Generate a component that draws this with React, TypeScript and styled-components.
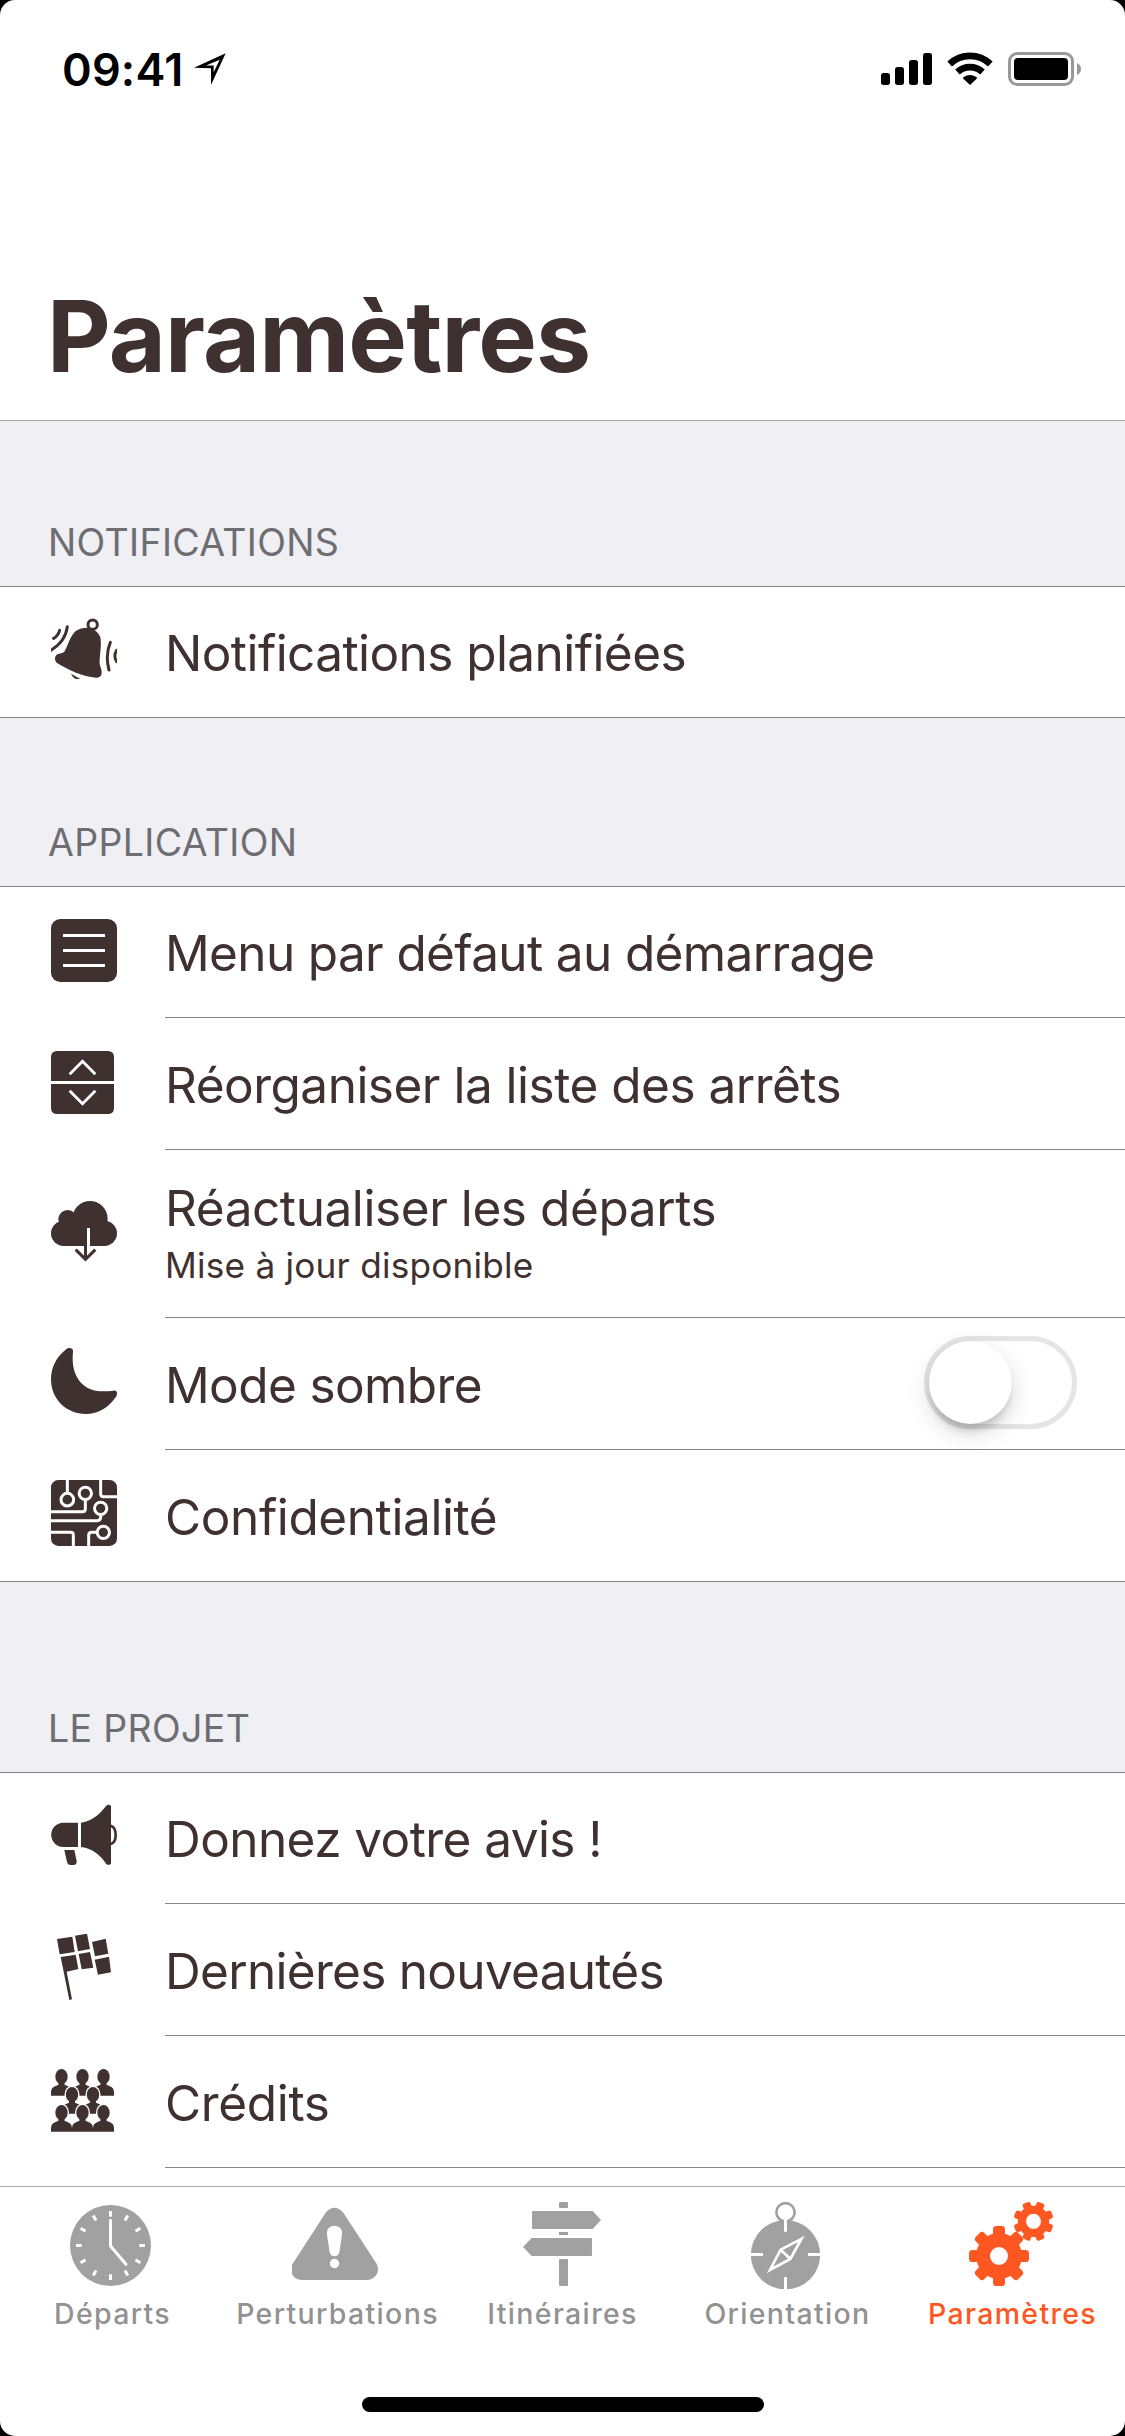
import React from 'react';
import styled, { createGlobalStyle } from 'styled-components';

const INK = '#3e3130';
const LINE = '#848484';
const GREY = '#a1a1a1';
const ORANGE = '#ff5722';

const GlobalStyle = createGlobalStyle`
  * { box-sizing: border-box; }
  body { margin: 0; background: #000; font-family: Inter, 'Liberation Sans', sans-serif; }
`;

const Screen = styled.div`
  width: 1125px;
  height: 2436px;
  display: flex;
  flex-direction: column;
  overflow: hidden;
  background: #fff;
  border-radius: 15px;
  color: ${INK};
`;

const StatusBar = styled.div`
  display: flex;
  align-items: flex-start;
  height: 132px;
  padding: 52px 44px 0 62px;
`;

const Clock = styled.span`
  color: #000;
  font-size: 45px;
  font-weight: 600;
  line-height: 35px;
  letter-spacing: 0.2px;
  width: 132px;
  white-space: nowrap;
`;

const StatusIcons = styled.div`
  display: flex;
  gap: 15px;
  margin-left: auto;
`;

const Header = styled.header`
  flex: none;
  height: 421px;
  border-bottom: 1px solid #a7a7aa;
`;

const Title = styled.h1`
  margin: 144px 0 0 47px;
  font-size: 98.5px;
  font-weight: 700;
  line-height: 121px;
  letter-spacing: -0.85px;
`;

const Content = styled.main`
  flex: none;
  height: 1765px;
  overflow: hidden;
  background: #efeff4;
`;

const SectionHeader = styled.h2<{ $height: number }>`
  display: flex;
  align-items: flex-end;
  height: ${(p) => p.$height}px;
  margin: 0;
  padding: 0 0 20px 48px;
  color: #6d6d72;
  font-size: 37.5px;
  font-weight: 400;
  line-height: 47px;
  letter-spacing: 0.33px;
`;

const Group = styled.div`
  background: #fff;
  border-top: 1px solid ${LINE};
`;

const Row = styled.div<{ $height: number; $last?: boolean }>`
  display: flex;
  height: ${(p) => p.$height}px;
  padding-left: 51px;
  border-bottom: ${(p) => (p.$last ? `1px solid ${LINE}` : 'none')};
`;

const RowIcon = styled.svg<{ $top: number }>`
  flex: none;
  width: 66px;
  height: 66px;
  margin: ${(p) => p.$top}px 48px 0 0;
  fill: ${INK};
`;

const RowBody = styled.div<{ $last?: boolean }>`
  flex: 1;
  display: flex;
  justify-content: space-between;
  align-items: center;
  padding-top: 2px;
  border-bottom: ${(p) => (p.$last ? 'none' : `1px solid ${LINE}`)};
`;

const Labels = styled.div`
  display: flex;
  flex-direction: column;
`;

const Label = styled.span<{ $spacing: number }>`
  font-size: 49.5px;
  line-height: 60px;
  letter-spacing: ${(p) => p.$spacing}px;
  white-space: nowrap;
`;

const SubLabel = styled.span`
  font-size: 35.2px;
  line-height: 54px;
  letter-spacing: 0.22px;
`;

const Toggle = styled.div`
  align-self: flex-start;
  width: 153px;
  height: 93px;
  margin: 16px 48px 0 0;
  border: 5px solid #e5e5e5;
  border-radius: 47px;
`;

const Knob = styled.div`
  width: 83px;
  height: 83px;
  border-radius: 50%;
  background: #fff;
  box-shadow: 0 9px 24px rgba(0, 0, 0, 0.15), 0 9px 9px -3px rgba(0, 0, 0, 0.16), 0 0 1px rgba(0, 0, 0, 0.08);
`;

const TabBar = styled.nav`
  flex: none;
  display: grid;
  grid-template-columns: repeat(5, 225px);
  height: 211px;
  padding-top: 15px;
  border-top: 1px solid #adadad;
  background: #fff;
`;

const Tab = styled.div<{ $active?: boolean }>`
  display: flex;
  flex-direction: column;
  align-items: center;
  color: ${(p) => (p.$active ? ORANGE : '#929292')};
  font-size: 28.5px;
  font-weight: 500;
  line-height: 34px;
  letter-spacing: 1.33px;
`;

const TabIcon = styled.svg<{ $active?: boolean }>`
  width: 91px;
  height: 90px;
  margin: 0 0 5px;
  fill: ${(p) => (p.$active ? ORANGE : GREY)};
`;

const HomeIndicator = styled.div`
  flex: none;
  width: 402px;
  height: 15px;
  margin: 0 auto;
  border-radius: 8px;
  background: #000;
`;

type IconProps = { top?: number };

const BellIcon = ({ top = 30 }: IconProps) => (
  <RowIcon $top={top} viewBox="63 51 198 198">
    <circle cx="188" cy="74" r="14" fill="none" stroke={INK} strokeWidth="9" />
    <path d="M168 83C182 82 205 92 211 112C216 135 208 170 209 192C211 202 216 210 215 220C214 230 208 234 198 233C160 230 115 210 80 188C72 180 74 168 82 163C90 159 97 161 103 155C112 140 118 115 132 98C142 87 155 84 168 83Z" />
    <path d="M123 221Q134 227 151 237L137 237Q127 232 123 221Z" />
    <path d="M89 91Q84 108 71 115M112 80Q106 126 62 151M241 127Q225 165 237 210M260 151Q249 168 260 185" fill="none" stroke={INK} strokeWidth="9" strokeLinecap="round" />
  </RowIcon>
);

const MenuIcon = ({ top = 30 }: IconProps) => (
  <RowIcon $top={top} viewBox="63 51 198 198">
    <rect x="63" y="57" width="198" height="189" rx="28" />
    <path d="M99 106.500H225M99 151.500H225M99 196.500H225" stroke="#fff" strokeWidth="9" />
  </RowIcon>
);

const ReorderIcon = ({ top = 30 }: IconProps) => (
  <RowIcon $top={top} viewBox="63 444 198 198">
    <path d="M63 543V472Q63 453 82 453H233Q252 453 252 472V543ZM63 552H252V623Q252 642 233 642H82Q63 642 63 623Z" />
    <path d="M119 523L157.500 484L196 523M119 572L157.500 611L196 572" fill="none" stroke="#fff" strokeWidth="8.500" />
  </RowIcon>
);

const CloudIcon = ({ top = 50 }: IconProps) => (
  <RowIcon $top={top} viewBox="63 90 198 198">
    <circle cx="101" cy="190" r="38" />
    <circle cx="113" cy="148" r="28" />
    <circle cx="180" cy="146" r="53" />
    <circle cx="223" cy="190" r="38" />
    <rect x="100" y="145" width="124" height="83" />
    <path d="M175.500 174V229" stroke="#fff" strokeWidth="9" />
    <path d="M166.500 180V268M137 239L166.500 268L196 239" fill="none" stroke={INK} strokeWidth="9" />
  </RowIcon>
);

const MoonIcon = ({ top = 30 }: IconProps) => (
  <RowIcon $top={top} viewBox="63 534 198 198">
    <path d="M106 540C115 530 131 533 129 546C122 610 150 665 222 664Q236 664 250 662C262 660 264 671 258 680C238 710 205 732 168 732C108 732 63 687 63 628C63 592 80 560 106 540Z" />
  </RowIcon>
);

const CircuitIcon = ({ top = 30 }: IconProps) => (
  <RowIcon $top={top} viewBox="63 930 198 198">
    <rect x="63" y="930" width="198" height="198" rx="22" />
    <g fill="none" stroke="#fff" strokeWidth="9">
      <circle cx="112" cy="989" r="19" />
      <circle cx="166" cy="970" r="18.5" />
      <circle cx="212" cy="1015" r="18.5" />
      <circle cx="220" cy="1087" r="18.5" />
      <path d="M112 930V970M166 988V1016Q166 1025 157 1025H63M212 1033V1042Q212 1052 202 1052H63M63 1087H122Q130 1087 130 1095V1128M202 1087H185Q176 1087 176 1096V1128M212 930V972Q212 980 220 980H261" />
    </g>
  </RowIcon>
);

const MegaphoneIcon = ({ top = 30 }: IconProps) => (
  <RowIcon $top={top} viewBox="63 39 198 198">
    <path d="M144 98H100A36.500 36.500 0 0 0 100 171H144ZM153 98C190 94 215 65 228 48Q236 41 243 48V221Q236 228 228 221C215 200 190 175 153 171ZM103 180H133L140 213Q141 225 130 225H122Q113 225 111 216Z" />
    <path d="M242 107C262 113 262 157 242 162" fill="none" stroke={INK} strokeWidth="8" />
  </RowIcon>
);

const FlagIcon = ({ top = 30 }: IconProps) => (
  <RowIcon $top={top} viewBox="63 432 198 198">
    <path d="M81 447L127 440L134 486L89 493ZM135 437L171 431L180 477L144 484ZM186 456L227 446L235 491L195 499ZM92 501L137 494L145 537L110 545L126 628L118 630L101 545ZM146 492L180 486L190 533L155 538ZM194 509L237 500L243 547L204 554Z" />
  </RowIcon>
);

const Person = ({ x, y }: { x: number; y: number }) => {
  const body = `M${x - 31.5} ${y + 57}V${y + 46}Q${x - 31} ${y + 31} ${x - 16} ${y + 27}L${x - 9} ${y + 24}V${y + 15}H${x + 9}V${y + 24}L${x + 16} ${y + 27}Q${x + 31} ${y + 31} ${x + 31.5} ${y + 46}V${y + 57}Z`;
  return (
    <g>
      <ellipse cx={x} cy={y} rx="22.5" ry="27.5" fill="#fff" />
      <path d={body} />
      <ellipse cx={x} cy={y} rx="18.5" ry="23" />
    </g>
  );
};

const CrowdIcon = ({ top = 30 }: IconProps) => (
  <RowIcon $top={top} viewBox="63 828 198 198">
    {[94.5, 157.5, 220.5].map((x) => <Person key={x} x={x} y={860} />)}
    {[126, 189].map((x) => <Person key={x} x={x} y={914} />)}
    {[94.5, 157.5, 220.5].map((x) => <Person key={x} x={x} y={968} />)}
  </RowIcon>
);

const DeparturesIcon = () => (
  <TabIcon viewBox="201 126 273 270">
    <circle cx="331.5" cy="256.5" r="121.5" />
    <g stroke="#fff" strokeWidth="9">
      {Array.from({ length: 12 }, (_, i) => (
        <path key={i} d="M331.500 153V170" transform={`rotate(${i * 30} 331.5 256.5)`} />
      ))}
      <path d="M331.500 181V258L378 313" fill="none" strokeLinecap="round" strokeLinejoin="round" />
    </g>
  </TabIcon>
);

const WarningIcon = () => (
  <TabIcon viewBox="876 126 273 270">
    <path d="M977 158Q1003 128 1030 158L1128 308C1144 335 1125 360 1101 360H906C880 360 864 335 879 310Z" />
    <path d="M1003.500 197Q1029 199 1026 224L1018 277Q1014 289 1003.500 289Q992 289 989 277L981 224Q978 199 1003.500 197Z" fill="#fff" />
    <circle cx="1003.5" cy="310.5" r="14" fill="#fff" />
  </TabIcon>
);

const SignpostIcon = () => (
  <TabIcon viewBox="201 126 273 270">
    <rect x="327" y="126" width="27" height="18" rx="3" />
    <path d="M249 153H428L453 180L428 207H249Q246 207 246 204V156Q246 153 249 153Z" />
    <rect x="327" y="216" width="27" height="9" />
    <path d="M423 234H245L219 261L245 288H423Q426 288 426 285V237Q426 234 423 234Z" />
    <rect x="327" y="297" width="27" height="81" rx="3" />
  </TabIcon>
);

const CompassIcon = () => (
  <TabIcon viewBox="876 126 273 270">
    <circle cx="1006.5" cy="284" r="104" />
    <circle cx="1006.5" cy="157" r="27.5" fill="#fff" stroke={GREY} strokeWidth="8" />
    <g fill="none" stroke="#fff" strokeWidth="9">
      <path d="M1006.500 176V215M1006.500 351V390M900 283.500H939M1074 283.500H1113" />
      <path d="M1054 237L1021 297L960 330L992 269ZM992 269L1021 297" strokeWidth="8" />
    </g>
  </TabIcon>
);

type GearProps = { cx: number; cy: number; outer: number; body: number; hole: number; tooth: number; turn: number };

const Gear = ({ cx, cy, outer, body, hole, tooth, turn }: GearProps) => (
  <g>
    {Array.from({ length: 4 }, (_, i) => (
      <rect
        key={i}
        x={cx - tooth / 2}
        y={cy - outer}
        width={tooth}
        height={outer * 2}
        rx={tooth * 0.28}
        transform={`rotate(${turn + i * 45} ${cx} ${cy})`}
      />
    ))}
    <circle cx={cx} cy={cy} r={body} />
    <circle cx={cx} cy={cy} r={hole} fill="#fff" />
  </g>
);

const GearsIcon = () => (
  <TabIcon $active viewBox="261 126 273 270">
    <Gear cx={357} cy={288} outer={90} body={69} hole={27} tooth={36} turn={0} />
    <Gear cx={460.5} cy={184} outer={60} body={47} hole={22.5} tooth={25} turn={22.5} />
  </TabIcon>
);

const LocationArrow = () => (
  <svg width="32" height="32" viewBox="583 164 96 96">
    <path fillRule="evenodd" d="M583 211L678 168L634 263V213ZM619 204.500H642V225L660 187Z" />
  </svg>
);

const SignalIcon = () => (
  <svg width="51" height="34" viewBox="168 156 153 102">
    <rect x="168" y="219" width="27" height="36" rx="8" />
    <rect x="210" y="201" width="27" height="54" rx="8" />
    <rect x="252" y="180" width="27" height="75" rx="8" />
    <rect x="294" y="159" width="27" height="96" rx="8" />
  </svg>
);

const WifiIcon = () => (
  <svg width="46" height="34" viewBox="366 156 138 102">
    <path d="M435 255L415 236Q413 233 416 231Q435 219 454 231Q457 233 455 236Z" />
    <path d="M374 192A88 88 0 0 1 496 192M397.500 216A55 55 0 0 1 472.500 216" fill="none" stroke="#000" strokeWidth="20" />
  </svg>
);

const BatteryIcon = () => (
  <svg width="73" height="34" viewBox="549 156 219 102">
    <rect x="553.5" y="160.5" width="189" height="93" rx="23" fill="none" stroke="#999" strokeWidth="9" />
    <rect x="567" y="174" width="162" height="66" rx="12" />
    <path d="M756 189Q768 195 768 207Q768 219 756 225Z" fill="#999" />
  </svg>
);

export default function App() {
  return (
    <>
      <GlobalStyle />
      <Screen>
        <Header>
          <StatusBar>
            <Clock>09:41</Clock>
            <LocationArrow />
            <StatusIcons>
              <SignalIcon />
              <WifiIcon />
              <BatteryIcon />
            </StatusIcons>
          </StatusBar>
          <Title>Paramètres</Title>
        </Header>

        <Content>
          <SectionHeader $height={165}>NOTIFICATIONS</SectionHeader>
          <Group>
            <Row $height={131} $last>
              <BellIcon />
              <RowBody $last><Label $spacing={-0.57}>Notifications planifiées</Label></RowBody>
            </Row>
          </Group>

          <SectionHeader $height={168}>APPLICATION</SectionHeader>
          <Group>
            <Row $height={131}>
              <MenuIcon />
              <RowBody><Label $spacing={-0.64}>Menu par défaut au démarrage</Label></RowBody>
            </Row>
            <Row $height={132}>
              <ReorderIcon />
              <RowBody><Label $spacing={-0.5}>Réorganiser la liste des arrêts</Label></RowBody>
            </Row>
            <Row $height={168}>
              <CloudIcon />
              <RowBody>
                <Labels>
                  <Label $spacing={-0.42}>Réactualiser les départs</Label>
                  <SubLabel>Mise à jour disponible</SubLabel>
                </Labels>
              </RowBody>
            </Row>
            <Row $height={132}>
              <MoonIcon />
              <RowBody>
                <Label $spacing={-0.6}>Mode sombre</Label>
                <Toggle><Knob /></Toggle>
              </RowBody>
            </Row>
            <Row $height={132} $last>
              <CircuitIcon />
              <RowBody $last><Label $spacing={-0.4}>Confidentialité</Label></RowBody>
            </Row>
          </Group>

          <SectionHeader $height={190}>LE PROJET</SectionHeader>
          <Group>
            <Row $height={131}>
              <MegaphoneIcon />
              <RowBody><Label $spacing={-0.57}>Donnez votre avis !</Label></RowBody>
            </Row>
            <Row $height={132}>
              <FlagIcon />
              <RowBody><Label $spacing={-0.7}>Dernières nouveautés</Label></RowBody>
            </Row>
            <Row $height={132}>
              <CrowdIcon />
              <RowBody><Label $spacing={-0.35}>Crédits</Label></RowBody>
            </Row>
            <Row $height={132} />
          </Group>
        </Content>

        <TabBar>
          <Tab><DeparturesIcon />Départs</Tab>
          <Tab><WarningIcon />Perturbations</Tab>
          <Tab><SignpostIcon />Itinéraires</Tab>
          <Tab><CompassIcon />Orientation</Tab>
          <Tab $active><GearsIcon />Paramètres</Tab>
        </TabBar>
        <HomeIndicator />
      </Screen>
    </>
  );
}
